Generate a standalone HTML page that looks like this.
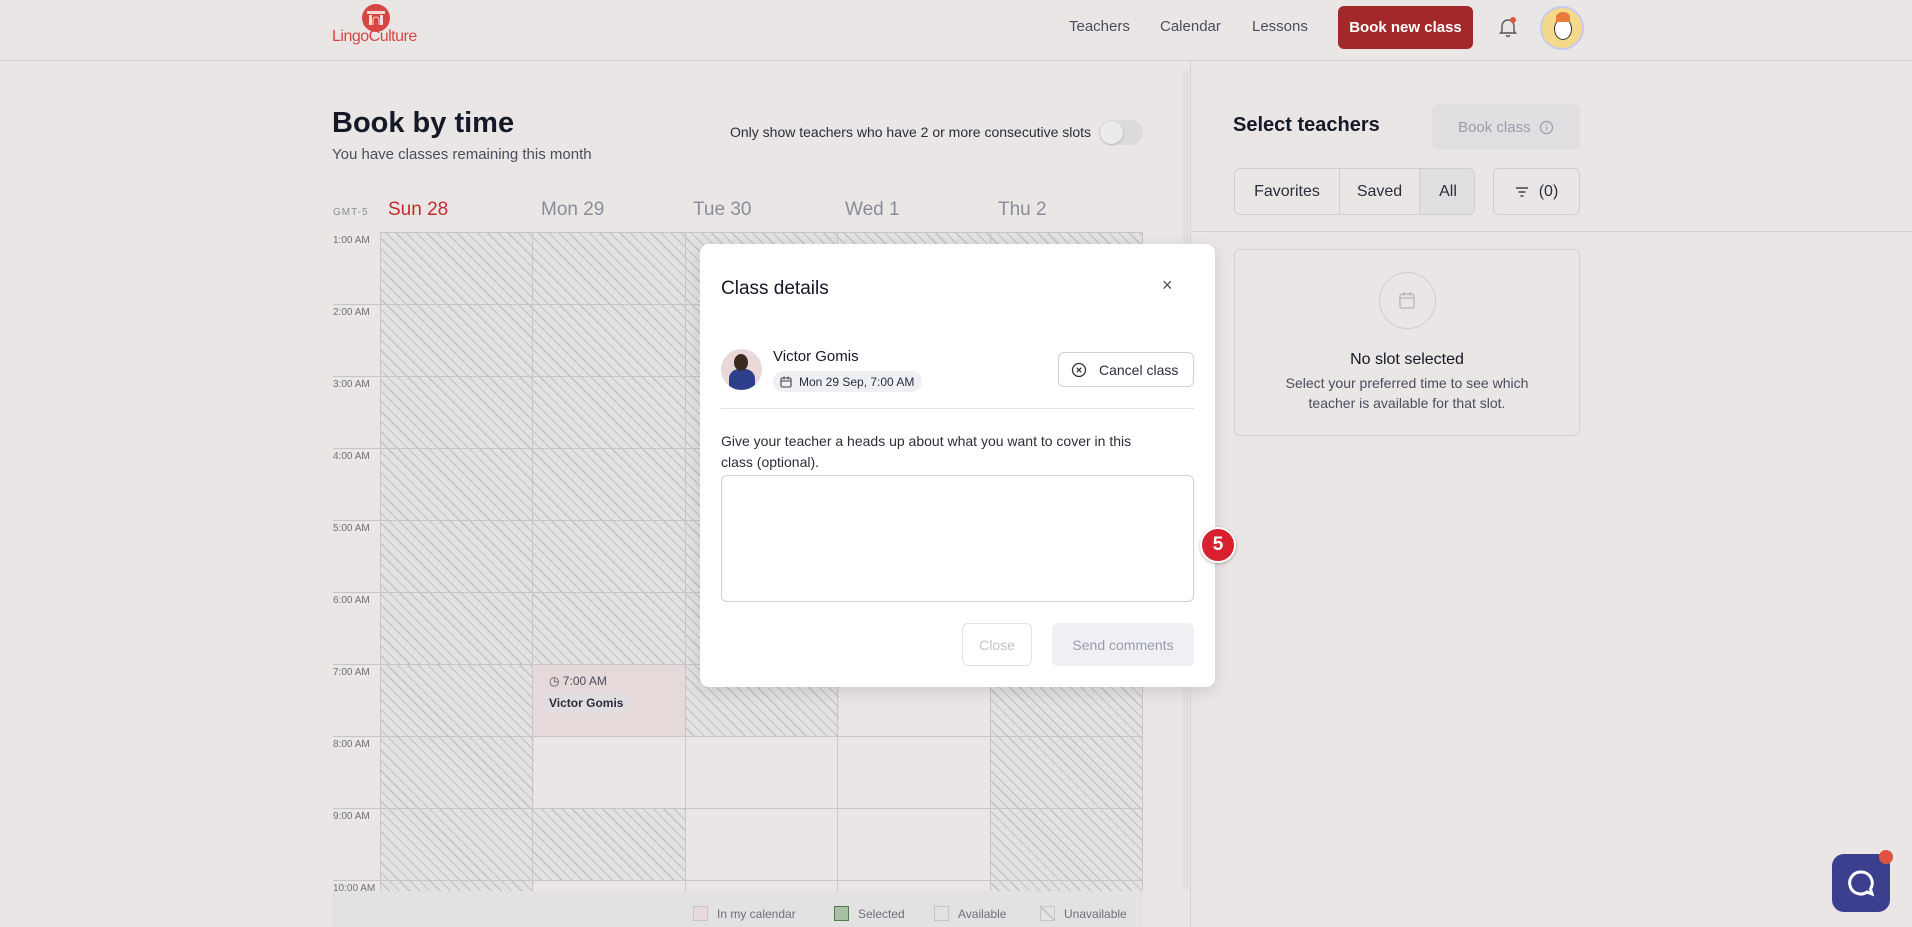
<!DOCTYPE html>
<html><head><meta charset="utf-8"><style>
*{box-sizing:border-box;margin:0;padding:0}
body{width:1912px;height:927px;overflow:hidden;background:#e9e6e5;font-family:"Liberation Sans",sans-serif;color:#1c1f2e;position:relative}
.abs{position:absolute}
.hdr{left:0;top:0;width:1912px;height:61px;border-bottom:1px solid #d4d1d2}
.nav{top:18px;font-size:15px;color:#4a4d5e}
.btnred{left:1338px;top:6px;width:135px;height:43px;background:#a3282a;border-radius:6px;color:#fff;font-size:15px;font-weight:bold;display:flex;align-items:center;justify-content:center}
.cell{position:absolute;width:153px;height:72px;border-right:1px solid #c7c5cb;border-bottom:1px solid #c7c5cb}
.h{background:repeating-linear-gradient(45deg,#e3e1e1 0,#e3e1e1 6px,#c3c1c8 6px,#c3c1c8 7.2px)}
.tl{position:absolute;left:333px;font-size:10px;color:#6d6f7c}
.rl{position:absolute;left:333px;width:810px;height:1px;background:#c7c5cb}
.day{position:absolute;top:199px;font-size:19px;color:#8a8c99}
.modal{left:700px;top:244px;width:515px;height:443px;background:#fff;border-radius:9px;box-shadow:0 4px 16px rgba(0,0,0,.12)}
.tab{position:absolute;top:0;height:100%;display:flex;align-items:center;justify-content:center;font-size:16px;color:#2a2d3c}
.leg{position:absolute;top:906px;font-size:12px;color:#6d6f7c}
.sw{display:inline-block;width:15px;height:15px;border:1px solid #c7c5cb;vertical-align:-3px;margin-right:9px}
</style></head><body>
<div class="abs hdr"></div>
<!-- logo -->
<svg class="abs" style="left:360px;top:4px" width="32" height="30" viewBox="0 0 32 30"><circle cx="16" cy="14" r="14" fill="#d64541"/><rect x="7" y="7" width="18" height="3" fill="#fff" opacity=".8"/><rect x="9" y="11" width="3" height="10" fill="#fff" opacity=".8"/><rect x="20" y="11" width="3" height="10" fill="#fff" opacity=".8"/><path d="M13 21v-5a3 3 0 0 1 6 0v5" stroke="#fff" fill="none" opacity=".8"/></svg>
<div class="abs" style="left:332px;top:28px;font-size:16px;color:#d64541;letter-spacing:-0.5px">LingoCulture</div>
<div class="abs nav" style="left:1069px">Teachers</div>
<div class="abs nav" style="left:1160px">Calendar</div>
<div class="abs nav" style="left:1252px">Lessons</div>
<div class="abs btnred">Book new class</div>
<svg class="abs" style="left:1498px;top:16px" width="20" height="22" viewBox="0 0 20 22"><path d="M4 15V10a6 6 0 0 1 12 0v5l1.5 2h-15z" fill="none" stroke="#555" stroke-width="1.4"/><path d="M8.5 19a1.5 1.5 0 0 0 3 0" fill="none" stroke="#555" stroke-width="1.4"/><circle cx="15" cy="4" r="3" fill="#e0533f"/></svg>
<div class="abs" style="left:1540px;top:6px;width:44px;height:44px;border-radius:50%;background:#f5d98a;border:2px solid #c7c8ef;overflow:hidden"><div style="position:absolute;left:12px;top:10px;width:18px;height:22px;border-radius:50%;background:#fff;border:1.5px solid #333"></div><div style="position:absolute;left:14px;top:4px;width:14px;height:10px;border-radius:50% 50% 0 0;background:#e87a3a"></div></div>

<!-- left -->
<div class="abs" style="left:332px;top:107px;font-size:29px;font-weight:bold;color:#151826">Book by time</div>
<div class="abs" style="left:332px;top:146px;font-size:15px;color:#4a4d5e">You have classes remaining this month</div>
<div class="abs" style="left:730px;top:124px;font-size:14px;color:#2a2d3c">Only show teachers who have 2 or more consecutive slots</div>
<div class="abs" style="left:1099px;top:120px;width:44px;height:25px;border-radius:13px;background:#dcdadd"><div style="position:absolute;left:1px;top:1px;width:23px;height:23px;border-radius:50%;background:#eceaea;box-shadow:0 1px 2px rgba(0,0,0,.2)"></div></div>
<div class="abs" style="left:1183px;top:70px;width:6px;height:820px;background:#e2dfdf;border-radius:3px"></div>
<div class="abs" style="left:1190px;top:61px;width:1px;height:866px;background:#d4d1d2"></div>

<div class="abs" style="left:333px;top:207px;font-size:10px;color:#8a8c99;letter-spacing:1px">GMT-5</div>
<div class="day" style="left:388px;color:#c62a2f">Sun 28</div>
<div class="day" style="left:541px">Mon 29</div>
<div class="day" style="left:693px">Tue 30</div>
<div class="day" style="left:845px">Wed 1</div>
<div class="day" style="left:998px">Thu 2</div>

<div class="abs" style="left:380px;top:232px;width:763px;height:659px;overflow:hidden;border-left:1px solid #c7c5cb;border-top:1px solid #c7c5cb">
<div style="position:relative">
<div class="cell h" style="left:0;top:0;width:763px;height:432px;border:none"></div>
<div class="cell h" style="left:0;top:432px;width:153px;height:227px;border:none"></div>
<div class="cell" style="left:152px;top:432px;background:#e6d9da;border:none;width:153px;height:72px"></div>
<div class="cell h" style="left:305px;top:432px;border:none;width:153px"></div>
<div class="cell h" style="left:610px;top:432px;width:153px;height:227px;border:none"></div>
<div class="cell h" style="left:152px;top:576px;border:none;width:153px"></div>
</div>
</div>
<div class="abs" style="left:380px;top:232px;width:763px;height:659px">
<div class="abs" style="left:152px;top:0;width:1px;height:659px;background:#c7c5cb"></div>
<div class="abs" style="left:305px;top:0;width:1px;height:659px;background:#c7c5cb"></div>
<div class="abs" style="left:457px;top:0;width:1px;height:659px;background:#c7c5cb"></div>
<div class="abs" style="left:610px;top:0;width:1px;height:659px;background:#c7c5cb"></div>
<div class="abs" style="left:762px;top:0;width:1px;height:659px;background:#c7c5cb"></div>
</div>
<div class="rl" style="top:232px;left:380px;width:763px"></div>
<div class="rl" style="top:304px"></div><div class="rl" style="top:376px"></div><div class="rl" style="top:448px"></div><div class="rl" style="top:520px"></div><div class="rl" style="top:592px"></div><div class="rl" style="top:664px"></div><div class="rl" style="top:736px"></div><div class="rl" style="top:808px"></div><div class="rl" style="top:880px"></div>
<div class="tl" style="top:235px">1:00 AM</div><div class="tl" style="top:307px">2:00 AM</div><div class="tl" style="top:379px">3:00 AM</div><div class="tl" style="top:451px">4:00 AM</div><div class="tl" style="top:523px">5:00 AM</div><div class="tl" style="top:595px">6:00 AM</div><div class="tl" style="top:667px">7:00 AM</div><div class="tl" style="top:739px">8:00 AM</div><div class="tl" style="top:811px">9:00 AM</div><div class="tl" style="top:883px">10:00 AM</div>

<div class="abs" style="left:549px;top:674px;font-size:12px;color:#4a4d5e">&#9719; 7:00 AM</div>
<div class="abs" style="left:543px;top:693px;padding:3px 6px;border-radius:8px;background:#e2dde0;font-size:12px;font-weight:bold;color:#2a2d3c">Victor Gomis</div>

<div class="abs" style="left:332px;top:891px;width:811px;height:36px;background:#e3e1e1"></div>
<div class="leg" style="left:693px"><span class="sw" style="background:#e8d9da"></span>In my calendar</div>
<div class="leg" style="left:834px"><span class="sw" style="background:#a9bfa6;border-color:#4e7a4e"></span>Selected</div>
<div class="leg" style="left:934px"><span class="sw"></span>Available</div>
<div class="leg" style="left:1040px"><span class="sw" style="background:linear-gradient(45deg,transparent 47%,#b5b3ba 47%,#b5b3ba 53%,transparent 53%)"></span>Unavailable</div>

<!-- modal -->
<div class="abs modal">
<div class="abs" style="left:21px;top:34px;font-size:19px;color:#151826">Class details</div>
<div class="abs" style="left:462px;top:31px;font-size:18px;color:#4a4d5e">×</div>
<div class="abs" style="left:21px;top:105px;width:41px;height:41px;border-radius:50%;background:#ead8d8;overflow:hidden"><div style="position:absolute;left:8px;top:20px;width:26px;height:24px;border-radius:40% 40% 0 0;background:#2d3f8a"></div><div style="position:absolute;left:13px;top:5px;width:14px;height:17px;border-radius:50%;background:#3a2a22"></div></div>
<div class="abs" style="left:73px;top:104px;font-size:15px;color:#151826">Victor Gomis</div>
<div class="abs" style="left:73px;top:127px;height:21px;padding:0 8px 0 6px;border-radius:11px;background:#eef0f4;font-size:12px;color:#2a2d3c;display:flex;align-items:center"><svg width="14" height="14" viewBox="0 0 14 14" style="margin-right:6px"><rect x="2" y="3" width="10" height="9" rx="1.5" fill="none" stroke="#444" stroke-width="1.1"/><path d="M2 6h10M5 1.5v3M9 1.5v3" stroke="#444" stroke-width="1.1"/></svg>Mon 29 Sep, 7:00 AM</div>
<div class="abs" style="left:358px;top:108px;width:136px;height:35px;border:1px solid #cfd0d8;border-radius:6px;display:flex;align-items:center;padding-left:12px;font-size:14px;color:#2a2d3c"><svg width="16" height="16" viewBox="0 0 16 16" style="margin-right:12px"><circle cx="8" cy="8" r="6.5" fill="none" stroke="#333" stroke-width="1.3"/><path d="M5.8 5.8l4.4 4.4M10.2 5.8l-4.4 4.4" stroke="#333" stroke-width="1.3"/></svg>Cancel class</div>
<div class="abs" style="left:21px;top:164px;width:473px;height:1px;background:#e2e3e8"></div>
<div class="abs" style="left:21px;top:187px;width:445px;font-size:14px;line-height:21px;color:#2a2d3c">Give your teacher a heads up about what you want to cover in this class (optional).</div>
<div class="abs" style="left:21px;top:231px;width:473px;height:127px;border:1px solid #cfd0d8;border-radius:6px"></div>
<div class="abs" style="left:262px;top:379px;width:70px;height:43px;border:1px solid #e2e3e8;border-radius:6px;display:flex;align-items:center;justify-content:center;font-size:14px;color:#c1c3cc">Close</div>
<div class="abs" style="left:352px;top:379px;width:142px;height:43px;background:#eff0f4;border-radius:6px;display:flex;align-items:center;justify-content:center;font-size:14px;color:#9a9cab">Send comments</div>
</div>
<div class="abs" style="left:1200px;top:527px;width:36px;height:36px;border-radius:50%;background:#d9202f;border:2px solid #fff;box-shadow:0 1px 3px rgba(0,0,0,.3);color:#fff;font-weight:bold;font-size:19px;display:flex;align-items:center;justify-content:center">5</div>

<!-- right -->
<div class="abs" style="left:1233px;top:114px;font-size:20px;font-weight:bold;color:#151826">Select teachers</div>
<div class="abs" style="left:1432px;top:104px;width:148px;height:46px;background:#e0dee1;border-radius:6px;display:flex;align-items:center;justify-content:center;font-size:15px;color:#9a9cab">Book class&nbsp;&nbsp;<svg width="15" height="15" viewBox="0 0 15 15"><circle cx="7.5" cy="7.5" r="6" fill="none" stroke="#9a9cab" stroke-width="1.2"/><path d="M7.5 6.5v4M7.5 4.3v.8" stroke="#9a9cab" stroke-width="1.2"/></svg></div>
<div class="abs" style="left:1234px;top:168px;width:241px;height:47px;border:1px solid #cfcdd2;border-radius:6px;overflow:hidden">
<div class="tab" style="left:0;width:105px;border-right:1px solid #cfcdd2">Favorites</div>
<div class="tab" style="left:105px;width:80px;border-right:1px solid #cfcdd2">Saved</div>
<div class="tab" style="left:185px;width:56px;background:#e0dee1">All</div>
</div>
<div class="abs" style="left:1493px;top:168px;width:87px;height:47px;border:1px solid #cfcdd2;border-radius:6px;display:flex;align-items:center;justify-content:center;font-size:16px;color:#2a2d3c"><svg width="14" height="12" viewBox="0 0 14 12" style="margin-right:10px"><path d="M1 2h12M3.5 6h7M5.5 10h3" stroke="#444" stroke-width="1.4"/></svg>(0)</div>
<div class="abs" style="left:1191px;top:231px;width:721px;height:1px;background:#d4d1d2"></div>
<div class="abs" style="left:1234px;top:249px;width:346px;height:187px;border:1px solid #d4d1d2;border-radius:6px"></div>
<div class="abs" style="left:1379px;top:272px;width:57px;height:57px;border:1px solid #cfcdd2;border-radius:50%"></div>
<svg class="abs" style="left:1398px;top:291px" width="18" height="19" viewBox="0 0 18 19"><rect x="2" y="3" width="14" height="14" rx="2" fill="none" stroke="#b5b3ba" stroke-width="1.3"/><path d="M2 7h14M6 1v4M12 1v4" stroke="#b5b3ba" stroke-width="1.3"/></svg>
<div class="abs" style="left:1234px;top:351px;width:346px;text-align:center;font-size:16px;color:#151826">No slot selected</div>
<div class="abs" style="left:1234px;top:373px;width:346px;text-align:center;font-size:14px;line-height:20px;color:#4a4d5e">Select your preferred time to see which<br>teacher is available for that slot.</div>

<div class="abs" style="left:1832px;top:854px;width:58px;height:58px;border-radius:12px;background:#3b3f8e;display:flex;align-items:center;justify-content:center"><svg width="30" height="30" viewBox="0 0 30 30"><path d="M15 4a11 11 0 1 0 6 20l5 2-1.5-5A11 11 0 0 0 15 4z" fill="none" stroke="#fff" stroke-width="3"/></svg></div>
<div class="abs" style="left:1879px;top:850px;width:14px;height:14px;border-radius:50%;background:#e0533f"></div>
</body></html>
